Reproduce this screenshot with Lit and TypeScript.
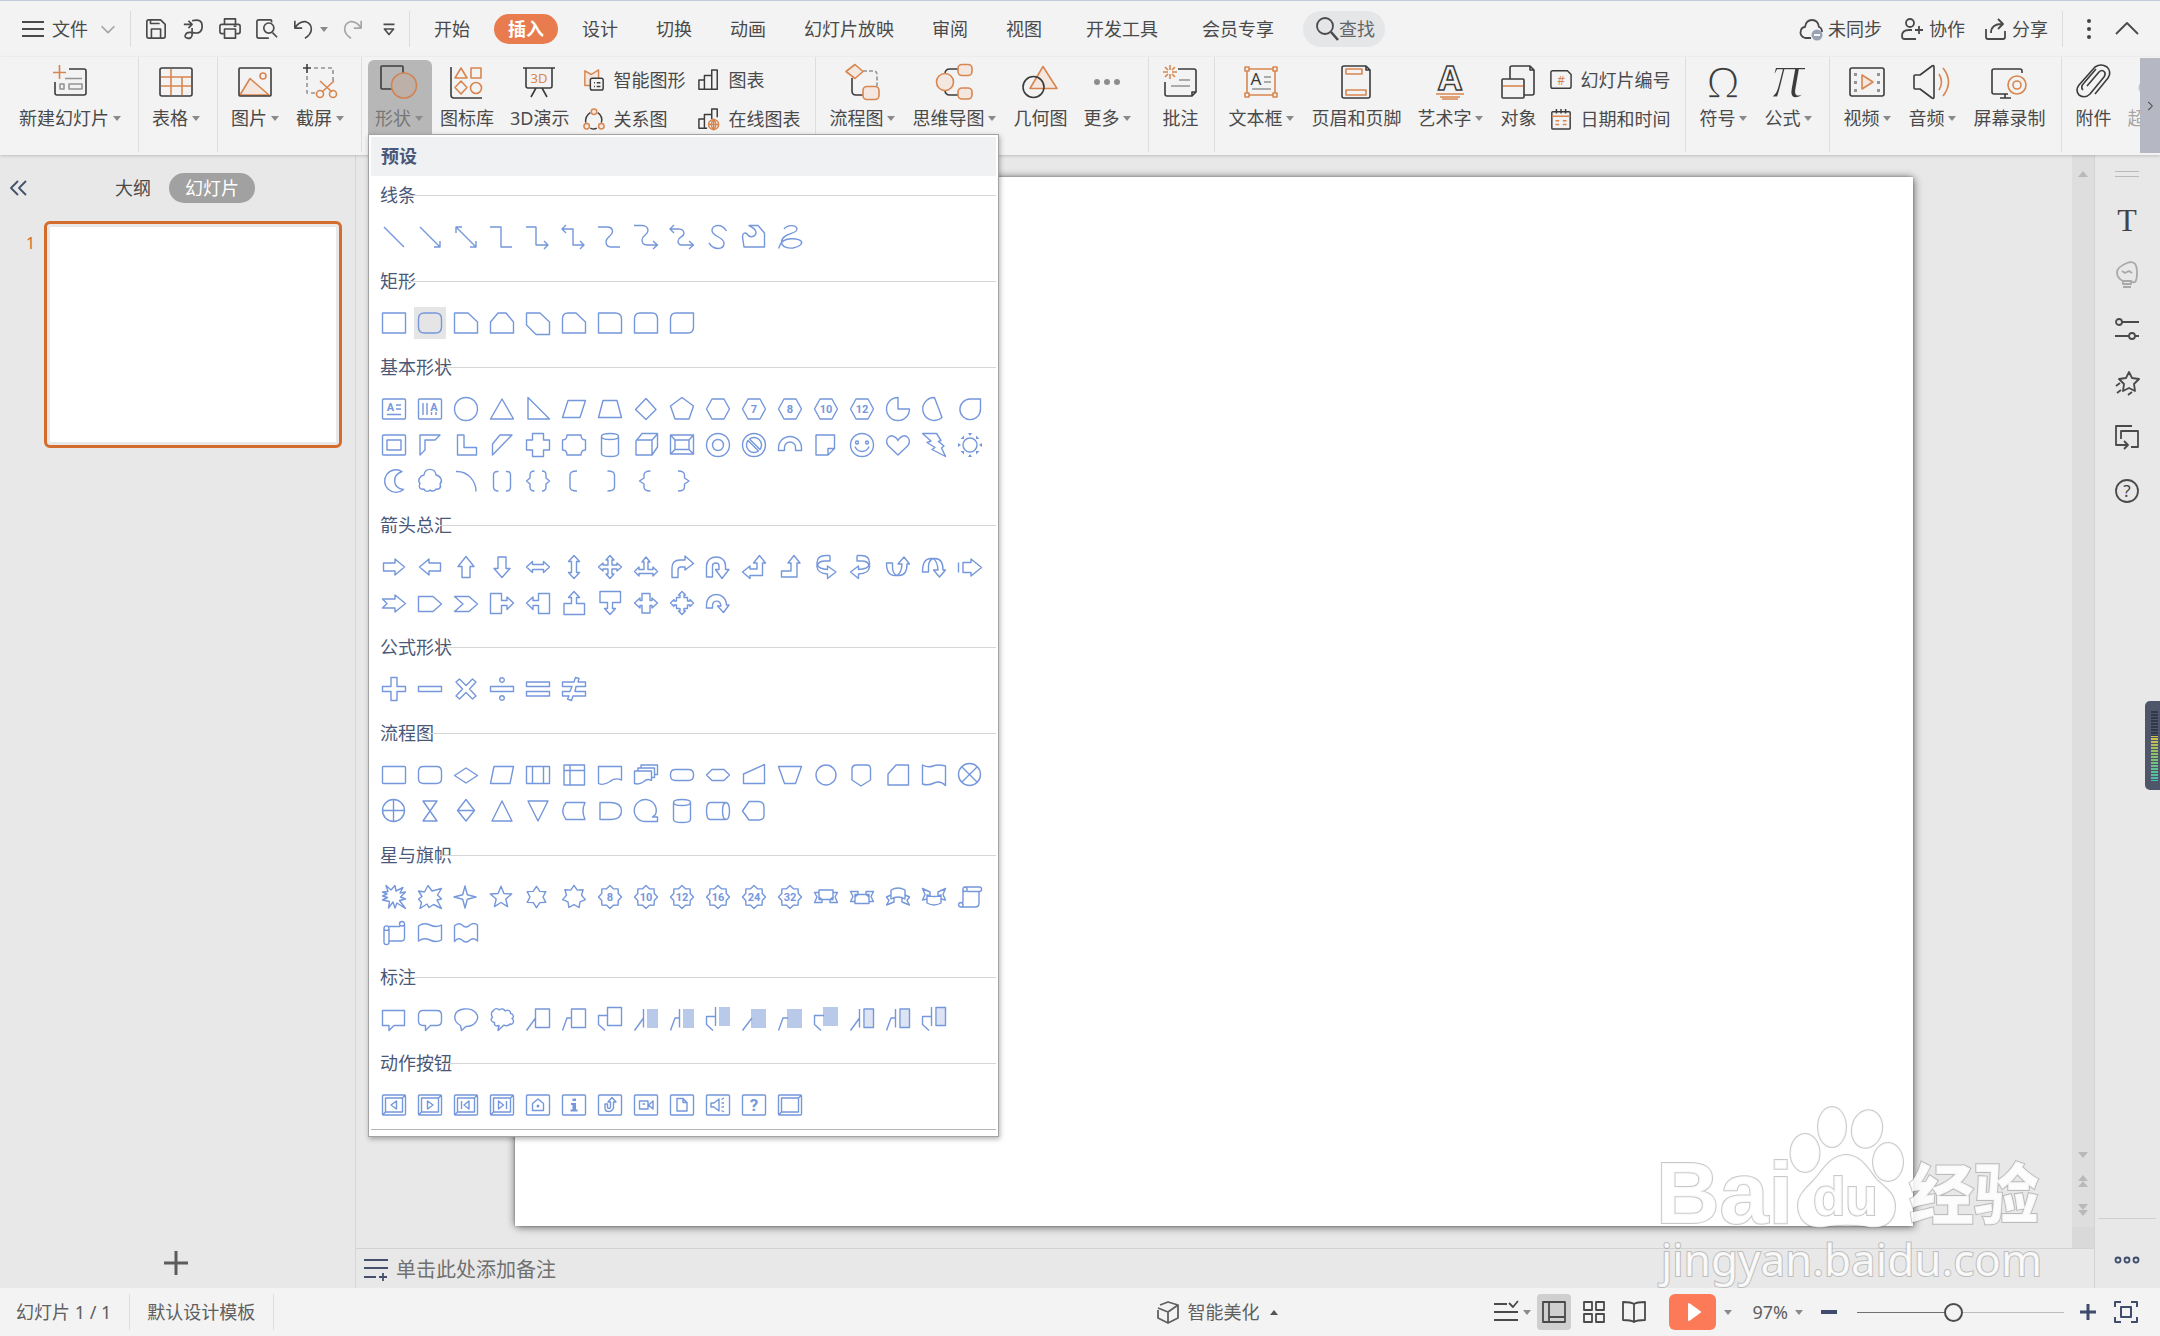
import { LitElement, html, svg, css, nothing, TemplateResult, SVGTemplateResult } from "lit";
import { customElement, property, state } from "lit/decorators.js";
import { classMap } from "lit/directives/class-map.js";

/* ---------- path helpers ---------- */

const circle = (x: number, y: number, r: number) =>
  `M${x - r} ${y}a${r} ${r} 0 1 0 ${2 * r} 0a${r} ${r} 0 1 0 ${-2 * r} 0Z`;

const box = (x1: number, y1: number, x2: number, y2: number, r = 0) =>
  r
    ? `M${x1 + r} ${y1}H${x2 - r}Q${x2} ${y1} ${x2} ${y1 + r}V${y2 - r}Q${x2} ${y2} ${x2 - r} ${y2}H${x1 + r}Q${x1} ${y2} ${x1} ${y2 - r}V${y1 + r}Q${x1} ${y1} ${x1 + r} ${y1}Z`
    : `M${x1} ${y1}H${x2}V${y2}H${x1}Z`;

const star = (points: number, x: number, y: number, outer: number, inner: number) => {
  let d = "";
  for (let i = 0; i < points * 2; i++) {
    const r = i % 2 ? inner : outer;
    const a = (Math.PI * i) / points - Math.PI / 2;
    d += `${i ? "L" : "M"}${(x + r * Math.cos(a)).toFixed(1)} ${(y + r * Math.sin(a)).toFixed(1)}`;
  }
  return d + "Z";
};

/* ---------- shape gallery ---------- */

interface Shape {
  d: string;
  label?: string;
  labelX?: number;
  labelSize?: number;
  fill?: [number, number, number, number];
  solid?: string;
  selected?: boolean;
}

const hexagon = "M.5 12L6 2H18L23.5 12L18 22H6Z";
const can = "M3.5 3.5V20.5C3.5 24.5 20.5 24.5 20.5 20.5V3.5C20.5 -.5 3.5 -.5 3.5 3.5C3.5 7.5 20.5 7.5 20.5 3.5";
const frame = box(0.5, 2, 23.5, 22, 1);
const bevel = frame + box(3.5, 5, 20.5, 19) + "M1 21.5L3.5 19M20.5 5L23 2.5";
const seal = star(8, 12, 12, 11.5, 9);

const shapes = (...items: (string | Shape)[]): Shape[] =>
  items.map((item) => (typeof item === "string" ? { d: item } : item));

const sections: { title: string; items: Shape[] }[] = [
  {
    title: "线条",
    items: shapes(
      "M2 2L22 22",
      "M2 2L22 22M16 22H22V16",
      "M2 2L22 22M16 22H22V16M2 8V2H8",
      "M0 2H11V22H22",
      "M0 2H10V20H22M18 16L22 20L18 24",
      "M0 4H11V20H22M4 0L0 4L4 8M18 16L22 20L18 24",
      "M0 2H9C13 2 14.5 4 14.5 6.5C14.5 11 8 12 8 16.5C8 20 10 22 13 22H22",
      "M0 .5H8C12 .5 14 3 14 5.5C14 10 8 10 8 15C8 18 10 20 13 20H23M19 16L23.5 20L19 24",
      "M0 4H9C12 4 14 6 14 8.5C14 12 8 12 8 16C8 18.5 9 20 12 20H23M4 0L0 4L4 8M19 16L23.5 20L19 24",
      "M20.5 6C18 2 15 .5 12 .5C8 .5 6 3 6 5.5C6 11.5 18 12 18 18C18 22 15 23.5 12 23.5C8 23.5 5 21 3 18",
      "M7 .5H16L22.5 8V22H2L.5 12C.5 8 3 7 5 9C7 12 10 12 12 11C16 8 14 4 7 .5Z",
      "M6 4C9 0 18 -1 19 4C20 9 4 8 3.5 17C3.5 22 10 23.5 15 23C22 22 25 18 23 16C20 13 6 12 2.5 19L.5 23.5"
    ),
  },
  {
    title: "矩形",
    items: shapes(
      box(0.5, 2, 23.5, 22),
      { d: box(0.5, 2, 23.5, 22, 6), selected: true },
      "M.5 2H14L23.5 11V22H.5Z",
      "M.5 11L8 2H16L23.5 11V22H.5Z",
      "M.5 2H14L23.5 11V23.5H10L.5 14Z",
      "M.5 8Q.5 2 6 2H14L23.5 11V22H.5Z",
      "M.5 2H17Q23.5 2 23.5 8V22H.5Z",
      "M.5 8Q.5 2 6 2H18Q23.5 2 23.5 8V22H.5Z",
      "M.5 8Q.5 2 6 2H23.5V16Q23.5 22 18 22H.5Z"
    ),
  },
  {
    title: "基本形状",
    items: shapes(
      { d: frame + "M14 8H19M14 12H19M5 17.5H19", label: "A", labelX: 8.5 },
      { d: frame + "M5 6V18M9 6V18M13.5 15V18M18 15V18", label: "A", labelX: 16 },
      circle(12, 12, 11.5),
      "M.5 22L12 2L23.5 22Z",
      "M2 .5V22H23.5Z",
      "M.5 20.5L6 3.5H23.5L18 20.5Z",
      "M.5 20.5L5 3.5H19L23.5 20.5Z",
      "M12 1.5L22 12.5L12 22.5L1.5 12.5Z",
      "M12 .5L23.5 9L19 22H5L.5 9Z",
      hexagon,
      { d: hexagon, label: "7" },
      { d: hexagon, label: "8" },
      { d: hexagon, label: "10" },
      { d: hexagon, label: "12" },
      "M12 .5V12H23.5A11.5 11.5 0 1 1 12 .5Z",
      "M12.5 .5L20 20.5A11.5 11.5 0 1 1 12.5 .5Z",
      "M22.5 2V12A10.3 10.3 0 1 1 12 2Z",
      frame + box(5, 7, 19, 17),
      "M2 2H22L17 7H7V17L2 22Z",
      "M3.5 2H10V14.5H22.5V22H3.5Z",
      "M2.5 11L10 2H22L2.5 22Z",
      "M6.5 .5H17.5V7H23.5V17H17.5V23.5H6.5V17H.5V7H6.5Z",
      "M5 2H19Q19 7 23.5 7V17Q19 17 19 22H5Q5 17 .5 17V7Q5 7 5 2Z",
      can,
      "M2 8L8 .5H23.5V14L18 22H2ZM2 7H18V22M18 7L23.5 1",
      box(0.5, 2, 23.5, 21) + box(5, 7, 19, 16.5) + "M.5 2L5 7M23.5 2L19 7M.5 21L5 16.5M23.5 21L19 16.5",
      circle(12, 12, 11.5) + circle(12, 12, 5.5),
      circle(12, 12, 11.5) + "M7.5 6A7.5 7.5 0 0 1 18 16.5ZM6 7.5A7.5 7.5 0 0 0 16.5 18Z",
      "M.5 17.5V15A11.5 11.5 0 0 1 23.5 15V17.5H17.5V14.5A5.5 5.5 0 0 0 6.5 14.5V17.5Z",
      "M2 2H20.5V15.5L14 22H2ZM14 22V15.5H20.5",
      circle(12, 12, 11.5) + circle(7, 9.5, 1.5) + circle(17, 9.5, 1.5) + "M5 13.5Q7 18.5 12 18.5T19 13.5",
      "M12 22L2 12.5C-2 6 4 1 8 3.5Q11 5 12 7.5Q13 5 16 3.5C20 1 26 6 22 12.5Z",
      "M.5 .5H14.5L19 7.5L16.5 8.5L22 13L19.5 15L23.5 23.5L10 16.5L13 14.5L5 9.5L9 8Z",
      {
        d: circle(12, 12, 7),
        solid:
          "M10 0H14L12 3ZM10 24H14L12 21ZM0 10V14L3 12ZM24 10V14L21 12ZM2.5 6L6 2.5V6ZM21.5 6L18 2.5V6ZM2.5 18L6 21.5V18ZM21.5 18L18 21.5V18Z",
      },
      "M20 2.5A11.3 11.3 0 1 0 21.5 20.5C10 19 10 6 20 2.5Z",
      "M6 6C7 -1.5 17 -1.5 18 6C23 7 25 12 22 15C24 19 20 21 18 20C17 22.5 13 22.5 12 21C10 23 7 23 6 20C2 21 0 18 2 14.5C-1 11 2 7 6 6Z",
      "M2 2.5C14 2 22 12 22 22.5",
      "M8.5 2.5Q3.5 2 3.5 6V18Q3.5 22 8.5 22M16 2.5Q20.5 2 20.5 6V18Q20.5 22 16 22",
      "M8.5 2Q4 2 4 6V9L.5 12L4 15V18Q4 22 8.5 22M16 2Q20 2 20 6V9L23.5 12L20 15V18Q20 22 16 22",
      "M15 2Q8 2 8 6V18Q8 22 15 22",
      "M9.5 2Q16.5 2 16.5 6V18Q16.5 22 9.5 22",
      "M16.5 2Q10 2 10 6V9L5.5 12L10 15V18Q10 22 16.5 22",
      "M8 2Q14.5 2 14.5 6V9L19 12L14.5 15V18Q14.5 22 8 22"
    ),
  },
  {
    title: "箭头总汇",
    items: shapes(
      "M1.5 8H13V4L22.5 12L13 20V16H1.5Z",
      "M22.5 8H11V4L1.5 12L11 20V16H22.5Z",
      "M8 22.5V11.5H4L12 1.5L20 11.5H16V22.5Z",
      "M8 2V13.5H4L12 22.5L20 13.5H16V2Z",
      "M.5 12L6.5 6.5V9.5H17.5V6.5L23.5 12L17.5 17.5V14.5H6.5V17.5Z",
      "M12 .5L17.5 6.5H14.5V17.5H17.5L12 23.5L6.5 17.5H9.5V6.5H6.5Z",
      "M12 .5L16 5H14V10H19V8L23.5 12L19 16V14H14V19H16L12 23.5L8 19H10V14H5V16L.5 12L5 8V10H10V5H8Z",
      "M12 2L16 7H14V14.5H19V12L23.5 16.5L19 21V18.5H5V21L.5 16.5L5 12V14.5H10V7H8Z",
      "M2 22.5V13Q2 5 10 5H15V1L23.5 8.5L15 15V12H11Q8 12 8 15V22.5Z",
      "M.5 22V11C.5 -1 20 -1 19.5 11V14.5H23L16 23.5L9.5 14.5H13V11C13 7 6.5 7 6.5 11V22Z",
      "M.5 17L8 11V14H15V8H11.5L17.5 .5L23.5 8H20.5V20.5H8V23.5Z",
      "M3.5 16H13V8H10L16 .5L22 8H19V22H3.5Z",
      "M16 .5H12Q3 .5 3 8V12Q4 18.5 13.5 19V23.5L22 17L13.5 11V14.5Q5 14 3.5 10M16 .5V6H11Q5 6 3.5 10",
      "M7 .5H11Q19.5 .5 19.5 8V12Q19 18.5 8.5 19V23.5L.5 17L8.5 11V14.5Q18 14 19 10M7 .5V6H12Q17.5 6 19 10",
      "M.5 8H6.5V13Q7 19 11 20.5Q15.5 18 16 9H12L18 2L23.5 9H21Q21 20.5 13 20.5H9Q.5 20.5 .5 8Z",
      "M.5 17H6.5V11Q7 5 11 3.5Q15.5 6 16 15H11.5L17.5 22L23.5 15H21Q21 3.5 13 3.5H9Q.5 3.5 .5 17Z",
      "M.5 7.5V17.5M5 7.5H13V4L23.5 12.5L13 21V17.5H5Z",
      "M.5 8H13V4L23.5 12.5L13 21V17H.5L5 12.5Z",
      "M.5 5.5H15L23.5 13L15 20.5H.5Z",
      "M.5 5.5H15L23.5 13L15 20.5H.5L9 13Z",
      "M.5 2.5H11.5V9.5H17V6L23.5 12L17 18.5V14.5H11.5V22.5H.5Z",
      "M23.5 2.5H12.5V9.5H7V6L.5 12L7 18.5V14.5H12.5V22.5H23.5Z",
      "M12 .5L17.5 6.5H14.5V12.5H22.5V23.5H2V12.5H9.5V6.5H6.5Z",
      "M12 23.5L17.5 17.5H14.5V11.5H22.5V.5H2V11.5H9.5V17.5H6.5Z",
      "M.5 12L6 7V9.5H8V2.5H16V9.5H18V7L23.5 12L18 17V14.5H16V22H8V14.5H6V17Z",
      "M12 .5L15.5 4H14V6.5H17.5V10H20V8.5L23.5 12L20 15.5V14H17.5V17.5H14V20H15.5L12 23.5L8.5 20H10V17.5H6.5V14H4V15.5L.5 12L4 8.5V10H6.5V6.5H10V4H8.5Z",
      "M.5 17V14C.5 0 20 0 20.5 14H23L17.5 21.5L11.5 15H15C14 8 6.5 9 6.5 15V17Z"
    ),
  },
  {
    title: "公式形状",
    items: shapes(
      "M9 .5H15V9.5H23.5V14.5H15V23.5H9V14.5H.5V9.5H9Z",
      "M.5 9.5H23.5V14.5H.5Z",
      "M2 5L5.5 2L12 8.5L18.5 2L22 5L15.5 12L22 19L18.5 22L12 15.5L5.5 22L2 19L8.5 12Z",
      "M.5 9.5H23.5V14.5H.5Z" + circle(12, 3, 2.3) + circle(12, 21, 2.3),
      "M.5 5H23.5V9.5H.5ZM.5 14.5H23.5V19H.5Z",
      "M.5 5H12L13.5 .5L17 1.5L16 5H23.5V9.5H14L13 14.5H23.5V19H11L9.5 23.5L5.5 22L7 19H.5V14.5H8L10 9.5H.5Z"
    ),
  },
  {
    title: "流程图",
    items: shapes(
      box(0.5, 3.5, 23.5, 20.5, 1),
      box(0.5, 3.5, 23.5, 20.5, 5),
      "M.5 12.5L12 5L23.5 12.5L12 20Z",
      "M4 3.5H23.5L20 20.5H.5Z",
      box(0.5, 3.5, 23.5, 20.5) + "M6.5 3.5V20.5M17.5 3.5V20.5",
      box(2, 2, 22.5, 22) + "M8 2V22M2 7.5H22.5",
      "M.5 3.5H23.5V17C17 14 14 17 12 18.5Q5 23 .5 20.5Z",
      "M.5 8H17.5V17.5Q13 15 10 18.5Q5 22 .5 20.5ZM4 8V5H20.5V14.5H17.5M7 5V2H23.5V11.5H20.5",
      box(0.5, 6.5, 23.5, 17.5, 5),
      "M.5 12L6 6.5H18L23.5 12L18 17.5H6Z",
      "M1.5 11L22.5 1.5V20.5H1.5Z",
      "M.5 3.5H23.5L17.5 20.5H6.5Z",
      circle(12, 12, 10),
      "M2 5Q3 2 6 2H17Q20.5 2 20.5 6V17L11 23L2 17Z",
      "M2 11L10 2H22.5V22H2Z",
      "M.5 2Q6 5 11 3T23.5 3V22.5Q18 17 12 20T.5 21Z",
      circle(11.5, 11.5, 11) + "M4 4L19 19M19 4L4 19",
      circle(11.5, 11.5, 11) + "M11.5 .5V22.5M.5 11.5H22.5",
      "M5 2H19L5 22H19Z",
      "M12 .5L20.5 11.5L12 22L3.5 11.5ZM3.5 11.5H20.5",
      "M2 22L12 2L22 22Z",
      "M2 2L12 22L22 2Z",
      "M4 3.5H23Q19 12 23 20.5H4Q-2.5 12 4 3.5Z",
      "M2 3.5H13Q23.5 4 23.5 12T13 20.5H2Z",
      "M21.5 15.5Q20 17 18.5 18H23.5V22.5H11.5A11 11 0 1 1 21.5 15.5",
      can,
      "M4 3.5H20Q23.5 4 23.5 12T20 20.5H4Q.5 20 .5 12T4 3.5ZM20 3.5Q16.5 4 16.5 12T20 20.5",
      "M.5 12L7 2.5H17Q22 3 22 8V16Q22 21 17 21H7Z"
    ),
  },
  {
    title: "星与旗帜",
    items: shapes(
      "M4 .5L9 5L13 .5L14 6L21 2.5L18 8L23.5 7L18.5 12L23.5 14L17.5 15.5L23.5 23.5L15 18L13 23L11 17L6.5 23L7.5 16.5L.5 15L5.5 12.5L.5 11L5 9L.5 7L6 6.5Z",
      "M10 .5L14 6L23.5 3.5L19.5 10L23.5 14L19 15L23.5 23.5L15.5 19.5L11 22.5L9 19L2 23.5L3.5 17.5L.5 14L4 11.5L.5 6L6.5 7Z",
      star(4, 11, 12, 11, 3.2),
      star(5, 11, 12.5, 11.3, 5),
      star(6, 10.5, 12, 10.7, 6.5),
      star(7, 12, 12, 11.7, 7.7),
      { d: seal, label: "8" },
      { d: seal, label: "10" },
      { d: seal, label: "12" },
      { d: seal, label: "16" },
      { d: seal, label: "24" },
      { d: seal, label: "32" },
      "M5 5H19V14.5H5ZM5 7.5H.5L3 12L.5 17.5H8V14.5M19 7.5H23.5L21 12L23.5 17.5H16V14.5M8 14.5L5 12M16 14.5L19 12",
      "M5 9.5H19V18.5H5ZM5 16.5H.5L3 11.5L.5 6.5H8V9.5M19 16.5H23.5L21 11.5L23.5 6.5H16V9.5M8 9.5L5 12M16 9.5L19 12",
      "M5 5Q12 1 19 5V14Q12 10 5 14ZM5 10L.5 12L3 15.5L.5 20L8 17V13M19 10L23.5 12L21 15.5L23.5 20L16 17V13",
      "M5 18Q12 22 19 18V10Q12 13 5 10ZM5 14L.5 15L3 9.5L.5 3.5L8 7V11M19 14L23.5 15L21 9.5L23.5 3.5L16 7V11",
      "M7 2H21.5C24.5 2 24 6.5 21.5 6.5H9M7 2C4 2 4.5 6.5 7 6.5C9.5 6.5 10 2 7 2M5 5V17.5M21 6.5V18.5Q21 22 17 22H3C-.5 22 0 17.5 3 17.5C6 18 5.5 22 3 22",
      "M6.5 5.5H18M6.5 20H19Q22.5 20 22.5 17V3C22.5 -.5 17.5 0 17.5 3C17.5 6 22.5 5.5 22.5 3M2 7.5C2 4 7 4 7 7.5V21C7 24.5 2 24.5 2 21ZM2 7.5C2 10 7 10 7 7.5",
      "M.5 5Q6 1 12 4T23.5 4V19Q18 22 12 19T.5 20Z",
      "M.5 5Q4 1 8 4Q12 8 16 4Q20 1 23.5 4V20Q20 16 16 19Q12 23 8 19Q4 16 .5 20.5Z"
    ),
  },
  {
    title: "标注",
    items: shapes(
      "M.5 3.5H22.5V18.5H12L7 23.5V18.5H.5Z",
      "M5 3.5H19Q23.5 3.5 23.5 8V14Q23.5 18.5 19 18.5H12.5L7.5 23.5V18.5H5Q.5 18.5 .5 14V8Q.5 3.5 5 3.5Z",
      "M6.5 18.5C-2 14 -1 3 10 2C21 1 27 9 21.5 15.5C19 18.5 15 19.5 12 19.5L7.5 23.5Z",
      "M3 4C5 1 8 1 9 3C12 1 14 2 15 4C18 2 21 4 20.5 6.5C24 7 24 11 22 11.5C25 14 23 18 20 17C18 19.5 15 19 14 18L8 23.5L9 18.5C6 20 4 18 4.5 15.5C1 15 0 12 2.5 10.5C1 8 1 5 3 4Z",
      box(9.5, 2, 23.5, 20.5) + "M.5 23.5L9.5 11",
      box(9.5, 2, 23.5, 20.5) + "M.5 23.5L5 11H9.5",
      box(9.5, 0.5, 23.5, 18.5) + "M7 23.5L.5 17.5V8.5H9.5",
      { d: "M.5 23.5L9.5 11M9.5 2V20.5", fill: [13, 2, 11, 19] },
      { d: "M.5 23.5L5 11H9.5M9.5 2V20.5", fill: [13, 2, 11, 19] },
      { d: "M7 23.5L.5 17.5V9.5H9.5M9.5 0V19", fill: [13, 0, 11, 19] },
      { d: "M.5 23.5L10 11", fill: [9, 2, 15, 19] },
      { d: "M.5 23.5L5 11H10", fill: [9, 2, 15, 19] },
      { d: "M7 23.5L.5 17.5V8.5H10", fill: [9, 0, 15, 19] },
      { d: "M.5 23.5L9.5 11M9.5 2V20.5" + box(14, 2, 23.5, 20.5), fill: [15, 3, 8, 17] },
      { d: "M.5 23.5L5 11H9.5M9.5 2V20.5" + box(14, 2, 23.5, 20.5), fill: [15, 3, 8, 17] },
      { d: "M7 23.5L.5 17.5V9.5H9.5M9.5 0V19" + box(14, 0.5, 23.5, 18.5), fill: [15, 1, 8, 17] }
    ),
  },
  {
    title: "动作按钮",
    items: shapes(
      bevel + "M14.5 8V16L9 12Z",
      bevel + "M9.5 8V16L15 12Z",
      bevel + "M15 8V16L10 12ZM7.5 8V16",
      bevel + "M8.5 8V16L13.5 12ZM16.5 8V16",
      { d: frame + "M6.5 10.5L12 6L17.5 10.5V17.5H6.5Z", solid: circle(12, 13, 1.5) },
      { d: frame, solid: "M10.5 5.5H14V8H10.5ZM9 10H14V16.5H15.5V18.5H8.5V16.5H10.5V12H9Z" },
      frame + "M7 11V15Q7 18.5 10.5 18.5T15.5 15V9H18L14 4.5L10 9H12.5V14Q12.5 15.5 11 15.5T9.5 14V11Z",
      frame + "M5.5 8H14V16H5.5ZM8.5 11H11M14.5 12L19 8V16Z",
      frame + "M7 5.5H13L17 9.5V18H7ZM13 5.5V9.5H17",
      frame + "M5 10H8L13 6V18L8 14H5ZM15.5 6.5L18 5M15.5 10H18M15.5 14H18M15.5 17.5L18 19",
      { d: frame, label: "?", labelSize: 17 },
      bevel
    ),
  },
];

@customElement("shape-glyph")
export class ShapeGlyph extends LitElement {
  static styles = css`
    :host { display: block; width: 24px; height: 24px; }
    .glyph { display: block; overflow: visible; fill: none; stroke: #7597db; stroke-width: 1.4; stroke-linejoin: round; }
    .label { fill: #7597db; stroke: none; font-family: "Roboto", "Liberation Sans", sans-serif; font-weight: 700; text-anchor: middle; }
    .block { fill: #b9c9ea; stroke: none; }
    .block.pale { fill: #dde4f4; }
    .solid { fill: #7597db; stroke: none; }
  `;

  @property({ attribute: false }) shape!: Shape;

  render() {
    const s = this.shape;
    const size = s.labelSize ?? 11;
    const f = s.fill;
    return html`<svg class="glyph" width="24" height="24" viewBox="0 0 24 24" aria-hidden="true">
      ${f ? svg`<rect class=${f[2] === 8 ? "block pale" : "block"} x=${f[0]} y=${f[1]} width=${f[2]} height=${f[3]} />` : nothing}
      <path d=${s.d} />
      ${s.solid ? svg`<path class="solid" d=${s.solid} />` : nothing}
      ${s.label
        ? svg`<text class="label" x=${s.labelX ?? 12} y=${s.label === "A" ? 13.5 : 12 + size * 0.36} font-size=${size}>${s.label}</text>`
        : nothing}
    </svg>`;
  }
}

@customElement("shape-menu")
export class ShapeMenu extends LitElement {
  static styles = css`
    :host { display: block; box-sizing: border-box; background: #fff; border: 1px solid #a3a3a3; padding: 2px 2px 6px; box-shadow: 1px 2px 5px rgba(0, 0, 0, 0.3); color: #4a5878; font-size: 18px; }
    .head { margin: 0; height: 39px; line-height: 39px; padding-left: 10px; background: #f0f1f3; font-size: 18px; font-weight: 700; }
    .section { padding-bottom: 7px; }
    .name { display: flex; align-items: center; margin: 0; height: 38px; padding-left: 9px; font-size: 18px; font-weight: 400; line-height: 38px; }
    .name::after { content: ""; flex: 1; height: 1px; margin-left: -12px; background: #d6d6d6; }
    .grid { display: flex; flex-wrap: wrap; gap: 4px; padding: 7px 0 2px 7px; }
    .cell { box-sizing: border-box; width: 32px; height: 32px; padding: 4px; border: 0; background: none; }
    .cell.selected { background: #e5e5e5; }
    .foot { height: 1px; margin-top: -1px; background: #b5b5b5; }
  `;

  render() {
    return html`
      <h2 class="head">预设</h2>
      ${sections.map(
        (section) => html`<section class="section">
          <h3 class="name">${section.title}</h3>
          <div class="grid">
            ${section.items.map(
              (shape, i) => html`<button
                class=${classMap({ cell: true, selected: !!shape.selected })}
                aria-label=${`${section.title} ${i + 1}`}
              ><shape-glyph .shape=${shape}></shape-glyph></button>`
            )}
          </div>
        </section>`
      )}
      <div class="foot"></div>
    `;
  }
}

/* ---------- ribbon icons: d = dark, o = orange, g = grey, t = orange with tint ---------- */

type Art = SVGTemplateResult;

const art: Record<string, Art> = {
  newSlide: svg`<path class="d" d="M17 5H32Q34 5 34 7V29Q34 31 32 31H5Q3 31 3 29V18"/><path class="o" d="M7.500 1V15M1 8.500H14"/><path class="g" d="M13 14.500H30M8 20H12V25H8ZM17 20H30V25H17Z"/>`,
  table: svg`<rect class="d" x="2" y="4" width="32" height="28" rx="2"/><path class="o" d="M13 5V31M24 13V31M3 13H33M3 22H33"/>`,
  picture: svg`<path class="t" d="M3 31L13 14.500L32 31Z"/><rect class="d" x="2" y="4" width="32" height="28" rx="1"/><circle class="o" cx="26" cy="12" r="3"/>`,
  capture: svg`<path class="g" stroke-dasharray="4 3" d="M12 4H31V18M5 12V29H14"/><path class="d" d="M5 0V9M1 4H9"/><path class="o" d="M18 17L30 28M32 17L20 28"/><circle class="o" cx="18" cy="30" r="3.500"/><circle class="o" cx="31" cy="30" r="3.500"/>`,
  shapes: svg`<rect class="d" x="0" y="2" width="22" height="23" rx="1"/><circle cx="23" cy="21.500" r="12.500" fill="#bdb0a8" stroke="#d18353" stroke-width="1.600"/>`,
  library: svg`<path class="d" d="M2 3V31Q2 34 5 34H33"/><path class="o" d="M12 4L18 14H6ZM22 4H32V14H22ZM12 17L18 23.500L12 30L6 23.500Z"/><circle class="o" cx="27" cy="24" r="5.500"/>`,
  board: svg`<path class="d" d="M1 4H33M4 4V22Q4 24 6 24H28Q30 24 30 22V4M14 24L9 33M20 24L25 33"/><text class="ot" x="17" y="19" font-size="13">3D</text>`,
  smart: svg`<path class="t" d="M2 2L9 6L17 1V18H2Z"/><rect class="db" x="8" y="10" width="14" height="13" rx="2"/><path class="d" d="M12 15H13M15 15H19M12 19H13M15 19H19"/>`,
  relation: svg`<path class="d" d="M8 5Q2 9 3 16M16 5Q22 9 20 16M8 22Q12 24 15 22"/><circle class="t" cx="12" cy="4" r="3"/><circle class="t" cx="4" cy="20" r="3"/><circle class="t" cx="20" cy="20" r="3"/>`,
  chart: svg`<path class="d" d="M1 12H7V22H1ZM7 22V7H15V22ZM15 22V1H21V22Z"/>`,
  webChart: svg`<path class="d" d="M1 12H7V22H1ZM7 22V7H15V12M15 12V1H21V10M7 22H10"/><circle class="ob" cx="17" cy="18" r="5.500"/><path class="o" d="M17 12V24M11 18H23M17 12Q12 18 17 24M17 12Q22 18 17 24"/>`,
  flow: svg`<path class="g" stroke-dasharray="4 2" d="M19 7H30Q33 7 33 11V22"/><path class="d" d="M8 14V27Q8 31 12 31H20"/><path class="t" d="M11 .5L19 7.500L11 14.500L2 7.500Z"/><rect class="t" x="19" y="22.500" width="16" height="13" rx="4"/>`,
  mind: svg`<path class="d" d="M9 10Q9 5 14 5H22M9 26Q9 31 14 31H22"/><circle class="t" cx="9" cy="18" r="8.500"/><rect class="t" x="22" y=".5" width="14" height="11" rx="4"/><rect class="t" x="22" y="24" width="14" height="11" rx="4"/>`,
  geometry: svg`<path class="t" d="M21 2.500L35 24.500H8Z"/><circle class="d" cx="11.500" cy="23" r="10.500"/>`,
  more: svg`<g fill="#8d8d8d"><circle cx="8" cy="18" r="3"/><circle cx="18" cy="18" r="3"/><circle cx="28" cy="18" r="3"/></g>`,
  note: svg`<path class="d" d="M16 5H32Q34 5 34 7V28L30 32H5Q3 32 3 30V18M34 28H30V32"/><path class="o" d="M8 1V6M8 10V15M1 8H6M10 8H15M3 3L6 6M13 3L10 6M3 13L6 10M13 13L10 10"/><path class="g" d="M17 16H28M9 22H28"/>`,
  textBox: svg`<path class="o" d="M4 5H32V31H4Z"/><g class="ob"><rect x="2" y="3" width="4" height="4"/><rect x="30" y="3" width="4" height="4"/><rect x="2" y="29" width="4" height="4"/><rect x="30" y="29" width="4" height="4"/></g><text class="dt" x="13" y="21" font-size="17">A</text><path class="g" d="M21 13H28M21 18H28M9 25H28"/>`,
  header: svg`<path class="d" d="M4 4Q4 2 6 2H28L32 6V32Q32 34 30 34H6Q4 34 4 32ZM28 2V6H32"/><path class="o" d="M8 5H24V10H8ZM8 26H28V31H8Z"/>`,
  wordArt: svg`<text x="18" y="26" font-size="34" font-weight="700" text-anchor="middle" fill="#f3f3f3" stroke="#3c3c3c" stroke-width="1.500">A</text><path class="o" d="M4 30H32M8 33H28M10 35H26"/>`,
  object: svg`<path class="d" d="M10 15V4Q10 2 12 2H30L34 6V29Q34 31 32 31H24M30 2V6H34"/><rect class="db" x="2" y="15" width="22" height="19" rx="1"/><path class="o" d="M3 22H23"/>`,
  number: svg`<path class="d" d="M1 4Q1 2 3 2H19L23 6V19Q23 21 21 21H3Q1 21 1 19Z"/><text class="ot" x="12" y="17" font-size="13">#</text>`,
  date: svg`<rect class="d" x="2" y="4" width="20" height="19" rx="1"/><path class="d" d="M7 1V6M12 1V6M17 1V6"/><path class="o" d="M2 9H22M6 14H10M14 14H18M6 18H10M14 18H18"/>`,
  omega: svg`<text class="dt thin" x="18" y="34" font-size="44">Ω</text>`,
  formula: svg`<text class="dt thin serif" x="18" y="33" font-size="66">π</text>`,
  video: svg`<rect class="d" x="1" y="4" width="34" height="28" rx="2"/><path class="t" d="M13 11V25L24 18Z"/><path class="g dash" d="M6.500 9V28M29.500 9V28"/>`,
  audio: svg`<path class="d" d="M0 12Q0 11 1 11H6L18 2Q20 1 20 3V33Q20 35 18 34L6 25H1Q0 25 0 24Z"/><path class="o" d="M25 10Q30 18 25 26M29 4Q40 18 29 32"/>`,
  record: svg`<path class="d" d="M31 9V7Q31 5 29 5H3Q1 5 1 7V28Q1 30 3 30H17M14 30V34M9 34H20"/><circle class="o" cx="26" cy="21" r="9"/><circle class="o" cx="26" cy="21" r="4"/>`,
  clip: svg`<path class="d" d="M12 22L24 8Q27 5 29.500 8Q31 10 29 13L15 30Q10 35 4 31Q0 26 4 21L20 3Q26 -1 32 3Q37 8 33 14L20 30M8 26Q5 23 9 19L21 5"/>`,
  link: svg`<path class="g" d="M14 12L20 6Q26 2 31 7Q35 12 30 17L25 22M22 22L16 29Q10 33 5 28Q1 23 6 18L11 13"/>`,
};

/* ---------- small line icons on a 24 grid ---------- */

const line: Record<string, Art> = {
  menu: svg`<path d="M1 5H23M1 12H23M1 19H23"/>`,
  down: svg`<path d="M5 9L12 16L19 9"/>`,
  up: svg`<path d="M1 17L12 6L23 17"/>`,
  save: svg`<path d="M2 4Q2 2 4 2H17L22 7V20Q22 22 20 22H4Q2 22 2 20ZM6 2V6H16M7 22V12H17V22"/>`,
  exportFile: svg`<path d="M2 7H10M7 3L11 7L7 11M11 3Q22 0 22 9T12 16M11 11V19Q10 23 6 22T4 18Q5 15 11 16"/>`,
  print: svg`<path d="M6 7V1H18V7M5 17H3Q1 17 1 15V9Q1 7 3 7H21Q23 7 23 9V15Q23 17 21 17H19M6 12H18V22H6ZM16 9H19"/>`,
  preview: svg`<path d="M17 5V3Q17 2 16 2H3Q1 2 1 4V20Q1 22 3 22H14M18 16L23 21"/><circle cx="14" cy="11" r="5.500"/>`,
  undo: svg`<path d="M2 3V11H10M2 11Q7 3 14 4Q20 6 20 12T13 22"/>`,
  redo: svg`<path d="M22 3V11H14M22 11Q17 3 10 4Q4 6 4 12T11 22"/>`,
  custom: svg`<path d="M6 7H18M7 12H17L12 18Z"/>`,
  search: svg`<circle cx="10" cy="9" r="8"/><path d="M16 15L23 23" stroke-width="2.500"/>`,
  cloud: svg`<path d="M12 21H6Q0 19 2 13Q3 10 6 10Q7 3 13 3T20 10Q23 11 23 15"/><circle cx="18" cy="18" r="5.500" fill="#9aa3b5" stroke="none"/><path d="M15 18H21" stroke="#fff"/>`,
  people: svg`<circle cx="10" cy="6" r="4"/><path d="M12 22H4Q2 22 2 19Q2 13 9 13H12M19 9V17M15 13H23M16 22H12"/>`,
  share: svg`<path d="M3 12V20Q3 22 5 22H20Q22 22 22 20V14M8 16Q8 7 19 7M15 2L20 7L15 12"/>`,
  dots: svg`<g fill="#444" stroke="none"><circle cx="12" cy="4" r="2"/><circle cx="12" cy="12" r="2"/><circle cx="12" cy="20" r="2"/></g>`,
  collapse: svg`<path d="M12 5L5 12L12 19M20 5L13 12L20 19"/>`,
  plus: svg`<path d="M12 0V24M0 12H24" stroke-width="3"/>`,
  notes: svg`<path d="M0 2H24M0 10H24M0 19H12M19 15V23M15 19H23" stroke="#44506d"/>`,
  textTool: svg`<text x="12" y="22" font-size="32" font-family="Liberation Serif" text-anchor="middle" fill="#444" stroke="none">T</text>`,
  bulb: svg`<path d="M8 18Q2 15 2 9.500T12 0T22 9.500T16 18V21H8ZM8 18H16M8 24H16M7 8L10 10L14 8L17 10"/>`,
  tune: svg`<circle cx="4" cy="5" r="3"/><path d="M7 5H24M0 19H14M20 19H24"/><circle cx="17" cy="19" r="3"/>`,
  effect: svg`<path d="M14 1L17 7L24 8L19 13L20 20L14 17L8 20L9 13L4 8L11 7ZM1 15L5 12M2 22L6 19M13 24L17 21"/>`,
  transition: svg`<path d="M17 1H1V20H13M9 16L13 20L9 24M6 14V6H23V22H16"/>`,
  help: svg`<circle cx="12" cy="12" r="11"/><text x="12" y="18" font-size="17" text-anchor="middle" fill="#444" stroke="none">?</text>`,
  rings: svg`<g stroke="#3f4c6b"><circle cx="3" cy="12" r="2.500"/><circle cx="12" cy="12" r="2.500"/><circle cx="21" cy="12" r="2.500"/></g>`,
  cube: svg`<path d="M4 5L12 2L22 5V18L12 23L2 18V10M2 8L12 12L22 5M12 12V23"/>`,
  listCheck: svg`<path d="M0 4H13M0 12H24M0 20H24M15 3L19 7L24 1"/>`,
  normal: svg`<path d="M1 2H23V22H1ZM7 2V22M7 17H23"/>`,
  gridView: svg`<path d="M2 2H10V10H2ZM14 2H22V10H14ZM2 14H10V22H2ZM14 14H22V22H14Z"/>`,
  book: svg`<path d="M12 4Q9 2 1 2V20Q9 20 12 22Q15 20 23 20V2Q15 2 12 4V22"/>`,
  play: svg`<path d="M7 2L21 12L7 22Z" fill="#fff" stroke="#fff"/>`,
  minus: svg`<path d="M4 12H20" stroke="#3f4c6b" stroke-width="4"/>`,
  zoomIn: svg`<path d="M12 4V20M4 12H20" stroke="#3f4c6b" stroke-width="3"/>`,
  fit: svg`<path d="M1 7V2H7M17 2H23V7M23 17V22H17M7 22H1V17M7 7H17V17H7Z" stroke="#3f4c6b" stroke-width="2"/>`,
};

const icon = (name: string, size = "") =>
  html`<svg class="line ${size}" viewBox="0 0 24 24" aria-hidden="true">${line[name]}</svg>`;

interface Tool {
  label: string;
  icon: string;
  caret?: boolean;
  active?: boolean;
  faded?: boolean;
}

type Group = (Tool | Tool[])[];

const groups: Group[] = [
  [{ label: "新建幻灯片", icon: "newSlide", caret: true }],
  [{ label: "表格", icon: "table", caret: true }],
  [
    { label: "图片", icon: "picture", caret: true },
    { label: "截屏", icon: "capture", caret: true },
  ],
  [
    { label: "形状", icon: "shapes", caret: true, active: true },
    { label: "图标库", icon: "library" },
    { label: "3D演示", icon: "board" },
    [
      { label: "智能图形", icon: "smart" },
      { label: "关系图", icon: "relation" },
    ],
    [
      { label: "图表", icon: "chart" },
      { label: "在线图表", icon: "webChart" },
    ],
  ],
  [
    { label: "流程图", icon: "flow", caret: true },
    { label: "思维导图", icon: "mind", caret: true },
    { label: "几何图", icon: "geometry" },
    { label: "更多", icon: "more", caret: true },
  ],
  [{ label: "批注", icon: "note" }],
  [
    { label: "文本框", icon: "textBox", caret: true },
    { label: "页眉和页脚", icon: "header" },
    { label: "艺术字", icon: "wordArt", caret: true },
    { label: "对象", icon: "object" },
    [
      { label: "幻灯片编号", icon: "number" },
      { label: "日期和时间", icon: "date" },
    ],
  ],
  [
    { label: "符号", icon: "omega", caret: true },
    { label: "公式", icon: "formula", caret: true },
  ],
  [
    { label: "视频", icon: "video", caret: true },
    { label: "音频", icon: "audio", caret: true },
    { label: "屏幕录制", icon: "record" },
  ],
  [
    { label: "附件", icon: "clip" },
    { label: "超链接", icon: "link", faded: true },
  ],
];

const tabs = ["开始", "插入", "设计", "切换", "动画", "幻灯片放映", "审阅", "视图", "开发工具", "会员专享"];

@customElement("app-root")
export class AppRoot extends LitElement {
  static styles = css`
    :host { display: flex; flex-direction: column; position: relative; height: 100vh; overflow: hidden; background: #e8e8e8; color: #4a4a4a; font: 18px/24px "Noto Sans", "Noto Sans CJK SC", sans-serif; }
    button, input { font: inherit; color: inherit; }
    button { display: flex; align-items: center; margin: 0; padding: 0; border: 0; background: none; white-space: nowrap; }
    .line { flex: none; width: 24px; height: 24px; overflow: visible; fill: none; stroke: currentColor; stroke-width: 1.8; stroke-linejoin: round; }
    .line.small { width: 22px; height: 22px; }
    .line.light { opacity: 0.45; }
    .caret { flex: none; width: 0; height: 0; border: solid transparent; border-width: 5px 4px 0; border-top-color: #8a8a8a; }
    .caret.up { border-width: 0 4px 5px; border-bottom-color: #555; }

    /* title row */
    .title { flex: none; display: flex; align-items: center; box-sizing: border-box; height: 57px; padding: 0 21px; border-top: 1px solid #c6cbdc; background: #f3f3f3; }
    .file { gap: 7px; margin-right: 11px; }
    .file .small { margin-left: 2px; }
    .rule { flex: none; width: 1px; height: 36px; background: #dcdcdc; }
    .quick { display: flex; align-items: center; gap: 15px; margin: 0 9px 0 14px; }
    .undo { gap: 5px; margin-right: -2px; }
    .tabs { display: flex; align-items: center; margin-left: 5px; }
    .tab { height: 30px; margin: 0 5px; padding: 0 14px; border-radius: 15px; }
    .tab.wide { margin-left: 11px; }
    .tab.active { background: #e87c4e; color: #fff; font-weight: 700; }
    .search { display: flex; align-items: center; height: 36px; margin-left: 10px; padding: 0 10px 0 12px; border-radius: 18px; background: #e5e6e8; }
    .search-box { width: 36px; margin: 0; padding: 0; border: 0; outline: 0; background: none; }
    .search-box::placeholder { color: #666; opacity: 1; }
    .account { display: flex; align-items: center; gap: 14px; margin-left: auto; }
    .named { gap: 5px; margin-left: 4px; }

    /* ribbon */
    .ribbon { flex: none; position: relative; z-index: 2; display: flex; height: 98px; background: #f3f3f3; box-shadow: 0 1px 3px rgba(0, 0, 0, 0.18); }
    .strip { flex: 1; display: flex; min-width: 0; padding-left: 11px; overflow-x: clip; }
    .group { flex: none; display: flex; align-items: flex-start; padding-top: 3px; }
    .group + .group::before { content: ""; width: 1px; height: 95px; margin: -3px 5px 0 8px; background: #dedede; }
    .anchor { position: relative; }
    .tool { flex-direction: column; height: 74px; padding: 4px 8px 0; }
    .tool.drop { padding-right: 9px; }
    .tool.active { margin-left: 1px; padding: 4px 9px 0 7px; border-radius: 6px 6px 0 0; background: #b7b7b7; color: #777; }
    .tool.faded { opacity: 0.45; }
    .caption { display: flex; align-items: center; gap: 4px; margin-top: 6px; }
    .stack { display: flex; flex-direction: column; padding: 0 7px 0 6px; }
    .mini { gap: 8px; height: 39px; }
    .art { flex: none; overflow: visible; }
    .d, .o, .g, .t, .db, .ob { stroke-width: 1.6; fill: none; stroke-linejoin: round; }
    .d, .db { stroke: #3c3c3c; }
    .o, .t, .ob { stroke: #d88650; }
    .g { stroke: #949494; }
    .dash { stroke-width: 3; stroke-dasharray: 3 5; }
    .t { fill: #f3e7e0; }
    .db, .ob { fill: #f3f3f3; }
    .ot { fill: #d88650; text-anchor: middle; }
    .dt { fill: #3c3c3c; text-anchor: middle; }
    .thin { stroke: #f3f3f3; stroke-width: 1.6; }
    .serif { font-family: "Liberation Serif", serif; font-style: italic; }
    .next { flex: none; justify-content: center; width: 20px; margin: 1px 0 2px; background: #b5b8c3; color: #444; }
    .next .line { width: 14px; height: 14px; transform: rotate(-90deg); }
    .menu { position: absolute; z-index: 5; top: 74px; left: 1px; width: 631px; }

    /* work area */
    .work { flex: 1; display: flex; min-height: 0; }
    .slides { flex: none; display: flex; flex-direction: column; box-sizing: border-box; width: 356px; padding-bottom: 13px; border-right: 1px solid #d6d6d6; }
    .modes { display: flex; align-items: center; height: 30px; padding: 18px 0 18px 6px; }
    .modes .line { color: #44506d; }
    .mode { height: 30px; padding: 0 16px; border-radius: 15px; }
    .mode:first-of-type { margin-left: 69px; padding-right: 18px; }
    .mode.active { background: #a1a1a1; color: #fff; }
    .thumb { gap: 11px; align-items: flex-start; padding: 0 13px 0 26px; color: #d46c2d; }
    .thumb-no { line-height: 24px; margin-top: 10px; font-size: 16px; width: 7px; }
    .thumb-page { flex: 1; box-sizing: border-box; aspect-ratio: 298 / 227; padding: 3px; border: 3px solid #d46c2d; border-radius: 6px; }
    .thumb-fill { display: block; height: 100%; background: #fff; }
    .add { margin: auto auto 0; padding-right: 4px; color: #5c5c5c; }
    .center { flex: 1; display: flex; flex-direction: column; min-width: 0; }
    .stage { flex: 1; display: flex; min-height: 0; }
    .canvas { flex: 1; display: flex; align-items: center; justify-content: center; min-width: 0; }
    .slide { height: calc(100% - 44px); aspect-ratio: 4 / 3; background: #fff; box-shadow: 0 0 2px rgba(0, 0, 0, 0.3), 2px 2px 8px rgba(0, 0, 0, 0.4), -2px -1px 7px rgba(0, 0, 0, 0.25); }
    .scroll { flex: none; display: flex; flex-direction: column; align-items: center; box-sizing: border-box; width: 22px; padding: 16px 0 32px; background: linear-gradient(#dedede, #dedede) top / 100% calc(100% - 21px) no-repeat #d9d9d9; }
    .scroll .caret { border-width: 6px 5px 0; border-top-color: #b9b9b9; }
    .scroll .caret.up { border-width: 0 5px 6px; border-bottom-color: #b9b9b9; }
    .scroll .first { margin-bottom: auto; }
    .pair { display: flex; flex-direction: column; padding-top: 17px; }
    .notes { flex: none; display: flex; align-items: center; gap: 8px; box-sizing: border-box; height: 40px; padding: 2px 8px 0; border-top: 1px solid #d3d3d3; }
    .notes-box { flex: 1; padding: 0; border: 0; outline: 0; background: none; font-size: 20px; line-height: 30px; }
    .notes-box::placeholder { color: #707070; opacity: 1; }
    .side { flex: none; display: flex; flex-direction: column; align-items: center; gap: 30px; box-sizing: border-box; width: 66px; padding: 16px 2px 0 0; border-left: 1px solid #d3d3d3; }
    .grip { width: 24px; height: 4px; margin-bottom: 2px; border: solid #b9b9b9; border-width: 1px 0; }
    .side .dim { color: #a9a9a9; }
    .side-more { display: flex; justify-content: center; width: 58px; height: 40px; margin-top: auto; padding-top: 29px; border-top: 1px solid #cfcfcf; }
    .meter { position: absolute; z-index: 3; right: 0; top: 701px; box-sizing: border-box; width: 15px; height: 89px; padding: 10px 2px 9px 6px; border-radius: 5px 0 0 5px; background: #4f566a; }
    .meter-bar { height: 70px; background: repeating-linear-gradient(transparent 0 2px, #4f566a 2px 3px), linear-gradient(#30384a 35%, #d8bf45 35%, #86c26b 65%, #3fc1b1); }

    /* status bar */
    .status { flex: none; display: flex; align-items: center; height: 48px; background: #f3f3f3; color: #606060; }
    .status .cell { padding: 0 18px 0 17px; }
    .status .cell:first-child { padding-left: 16px; }
    .beauty { gap: 7px; margin: 0 10% 0 auto; }
    .beauty .caret { margin-left: 4px; }
    .views { display: flex; align-items: center; gap: 6px; padding-right: 22px; color: #4a4a4a; }
    .view { justify-content: center; gap: 5px; width: 34px; height: 36px; border-radius: 4px; }
    .view.list { width: 37px; }
    .view.active { background: #cfcfcf; }
    .play { justify-content: center; width: 47px; height: 36px; margin: 0 2px 0 12px; border-radius: 6px; background: #fc7a57; }
    .play .line { width: 20px; height: 20px; }
    .percent { gap: 7px; margin: 0 8px 0 14px; color: #606060; }
    .zoom { appearance: none; width: 207px; height: 20px; margin: 0 6px 0 10px; background: none; }
    .zoom::-webkit-slider-runnable-track { height: 1px; background: linear-gradient(90deg, #707070 46%, #bdbdbd 46%); }
    .zoom::-webkit-slider-thumb { appearance: none; box-sizing: border-box; width: 19px; height: 19px; margin-top: -9px; border: 2px solid #4c4c4c; border-radius: 50%; background: #f3f3f3; }
    .fit { margin-left: 8px; }

    .mark { position: absolute; z-index: 4; right: 112px; bottom: 46px; width: 400px; height: 190px; overflow: visible; pointer-events: none; font-family: "Noto Sans", "Noto Sans CJK SC", sans-serif; fill: rgba(255, 255, 255, 0.85); stroke: rgba(120, 120, 120, 0.4); stroke-width: 2; paint-order: stroke; }
    .brand { font-family: "Liberation Sans", sans-serif; font-weight: 700; }
  `;

  @state() private tab = "插入";

  private art(name: string, size: number): TemplateResult {
    const grid = size === 36 ? 36 : 24;
    return html`<svg class="art" width=${size} height=${size} viewBox="0 0 ${grid} ${grid}" aria-hidden="true">${art[name]}</svg>`;
  }

  private tool(t: Tool | Tool[]): TemplateResult {
    if (Array.isArray(t)) {
      return html`<div class="stack">
        ${t.map((m) => html`<button class="mini">${this.art(m.icon, 22)}<span>${m.label}</span></button>`)}
      </div>`;
    }
    return html`<div class="anchor">
      <button class=${classMap({ tool: true, drop: !!t.caret, active: !!t.active, faded: !!t.faded })}>
        ${this.art(t.icon, 36)}
        <span class="caption">${t.label}${t.caret ? html`<i class="caret"></i>` : nothing}</span>
      </button>
      ${t.active ? html`<shape-menu class="menu"></shape-menu>` : nothing}
    </div>`;
  }

  render() {
    return html`
      <header class="title">
        <button class="file">${icon("menu")}文件${icon("down", "small light")}</button>
        <span class="rule"></span>
        <div class="quick">
          <button aria-label="保存">${icon("save", "small")}</button>
          <button aria-label="输出">${icon("exportFile", "small")}</button>
          <button aria-label="打印">${icon("print", "small")}</button>
          <button aria-label="打印预览">${icon("preview", "small")}</button>
          <button class="undo" aria-label="撤销">${icon("undo", "small")}<i class="caret"></i></button>
          <button aria-label="恢复">${icon("redo", "small light")}</button>
          <button aria-label="自定义">${icon("custom", "small")}</button>
        </div>
        <span class="rule"></span>
        <nav class="tabs">
          ${tabs.map(
            (name) => html`<button
              class=${classMap({ tab: true, active: name === this.tab, wide: name.length === 4 })}
              @click=${() => (this.tab = name)}
            >${name}</button>`
          )}
        </nav>
        <label class="search">${icon("search")}<input class="search-box" placeholder="查找" aria-label="查找" /></label>
        <div class="account">
          <button class="named">${icon("cloud")}未同步</button>
          <button class="named">${icon("people")}协作</button>
          <button class="named">${icon("share")}分享</button>
          <span class="rule"></span>
          <button aria-label="更多选项">${icon("dots")}</button>
          <button aria-label="折叠功能区">${icon("up")}</button>
        </div>
      </header>

      <div class="ribbon">
        <div class="strip">
          ${groups.map((group) => html`<div class="group">${group.map((t) => this.tool(t))}</div>`)}
        </div>
        <button class="next" aria-label="向右滚动">${icon("down")}</button>
      </div>

      <main class="work">
        <aside class="slides">
          <div class="modes">
            ${icon("collapse")}
            <button class="mode">大纲</button>
            <button class="mode active">幻灯片</button>
          </div>
          <button class="thumb">
            <span class="thumb-no">1</span>
            <span class="thumb-page"><span class="thumb-fill"></span></span>
          </button>
          <button class="add" aria-label="新建幻灯片">${icon("plus")}</button>
        </aside>
        <section class="center">
          <div class="stage">
            <div class="canvas"><div class="slide"></div></div>
            <div class="scroll">
              <i class="caret up first"></i>
              <i class="caret"></i>
              <span class="pair"><i class="caret up"></i><i class="caret up"></i></span>
              <span class="pair"><i class="caret"></i><i class="caret"></i></span>
            </div>
          </div>
          <label class="notes">${icon("notes")}<input class="notes-box" placeholder="单击此处添加备注" aria-label="备注" /></label>
        </section>
        <aside class="side">
          <span class="grip"></span>
          <button aria-label="文本">${icon("textTool")}</button>
          <button class="dim" aria-label="灵感">${icon("bulb")}</button>
          <button aria-label="属性">${icon("tune")}</button>
          <button aria-label="动画">${icon("effect")}</button>
          <button aria-label="切换">${icon("transition")}</button>
          <button aria-label="帮助">${icon("help")}</button>
          <div class="side-more">${icon("rings")}</div>
        </aside>
      </main>

      <footer class="status">
        <span class="cell">幻灯片 1 / 1</span>
        <span class="rule"></span>
        <span class="cell">默认设计模板</span>
        <span class="rule"></span>
        <button class="beauty">${icon("cube")}智能美化<i class="caret up"></i></button>
        <div class="views">
          <button class="view list" aria-label="备注视图">${icon("listCheck")}<i class="caret"></i></button>
          <button class="view active" aria-label="普通视图">${icon("normal")}</button>
          <button class="view" aria-label="浏览视图">${icon("gridView")}</button>
          <button class="view" aria-label="阅读视图">${icon("book")}</button>
          <button class="play" aria-label="放映">${icon("play")}</button>
          <i class="caret"></i>
          <button class="percent">97%<i class="caret"></i></button>
          <button aria-label="缩小">${icon("minus")}</button>
          <input class="zoom" type="range" min="0" max="1000" .value=${"464"} aria-label="缩放" />
          <button aria-label="放大">${icon("zoomIn")}</button>
          <button class="fit" aria-label="适应窗口">${icon("fit")}</button>
        </div>
      </footer>

      <div class="meter"><div class="meter-bar"></div></div>

      <svg class="mark" viewBox="0 0 400 190" aria-hidden="true">
        <text class="brand" x="8" y="123" font-size="88">Bai</text>
        <ellipse cx="157" cy="53" rx="14.500" ry="19" />
        <ellipse cx="184" cy="27" rx="14" ry="20" />
        <ellipse cx="219" cy="29" rx="15" ry="19" transform="rotate(12 219 29)" />
        <ellipse cx="240" cy="62" rx="15" ry="19" />
        <path d="M198 55C213 55 221 70 228 79C236 87 247 93 247 106C247 122 236 129 221 127C207 124 192 124 176 127C160 129 150 120 150 105C150 94 160 87 167 79C175 70 183 55 198 55Z" />
        <text class="brand" x="165" y="115" font-size="53">du</text>
        <text x="261" y="118" font-size="65" font-weight="900">经验</text>
        <text x="13" y="176" font-size="44">jingyan.baidu.com</text>
      </svg>
    `;
  }
}
